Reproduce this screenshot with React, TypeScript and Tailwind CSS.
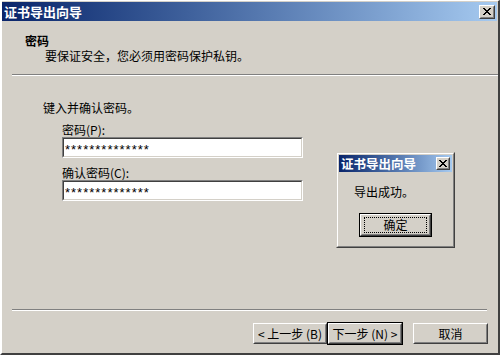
import React from "react";

const font = "font-['Noto_Sans_CJK_SC','Noto_Sans',sans-serif]";

function CloseX({ size = 8 }: { size?: number }) {
  return (
    <svg width={size} height={size - 1} viewBox="0 0 8 7" shapeRendering="crispEdges">
      <path d="M0 0h2v1h-2zM6 0h2v1h-2zM1 1h2v1h-2zM5 1h2v1h-2zM2 2h4v1h-4zM3 3h2v1h-2zM2 4h4v1h-4zM1 5h2v1h-2zM5 5h2v1h-2zM0 6h2v1h-2zM6 6h2v1h-2z" fill="#000" />
    </svg>
  );
}

function Raised({ className = "", children }: { className?: string; children?: React.ReactNode }) {
  return (
    <div className={`border border-t-white border-l-white border-r-[#404040] border-b-[#404040] bg-[#d4d0c8] ${className}`}>
      <div className="w-full h-full border border-t-[#d4d0c8] border-l-[#d4d0c8] border-r-[#808080] border-b-[#808080] flex items-center justify-center">
        {children}
      </div>
    </div>
  );
}

function Input() {
  return (
    <div className="w-[241px] h-[21px] border border-t-[#808080] border-l-[#808080] border-r-white border-b-white">
      <div className="w-full h-full border border-t-[#404040] border-l-[#404040] border-r-[#d4d0c8] border-b-[#d4d0c8] bg-white flex items-center pl-[1px]">
        <span className="text-[13px] leading-[12px] text-black font-['Liberation_Sans',sans-serif] tracking-[1px] pt-[4px]">**************</span>
      </div>
    </div>
  );
}

export default function App() {
  return (
    <div className={`${font} w-[500px] h-[355px] bg-[#d4d0c8] relative overflow-hidden`}>
      <div className="w-full h-full border-l-2 border-t border-l-white border-t-white border-r-2 border-b-2 border-r-[#404040] border-b-[#404040] flex flex-col">
        {/* title bar */}
        <div className="h-[19px] mt-[1px] mr-[1px] bg-gradient-to-r from-[#0a246a] to-[#a6caf0] flex items-center justify-between pl-[2px] pr-[2px]">
          <span className="text-white font-bold text-[13px] leading-[13px]">证书导出向导</span>
          <Raised className="w-[16px] h-[14px]">
            <CloseX />
          </Raised>
        </div>
        {/* header */}
        <div className="h-[53px] pl-[23px] pt-[13px] flex flex-col">
          <div className="text-[12px] leading-[13px] font-bold text-black">密码</div>
          <div className="text-[12px] leading-[13px] text-black pl-[20px] pt-[2px]">要保证安全，您必须用密码保护私钥。</div>
        </div>
        <div className="ml-[10px] mr-[0px] border-t border-t-[#808080] border-b border-b-white" />
        {/* body */}
        <div className="flex-1 flex flex-col pl-[41px] pt-[25px]">
          <div className="text-[12px] leading-[13px] text-black">键入并确认密码。</div>
          <div className="pl-[19px] pt-[9px] flex flex-col">
            <div className="text-[12px] leading-[13px] text-black">密码(P):</div>
            <div className="pt-[1px]"><Input /></div>
            <div className="text-[12px] leading-[13px] text-black pt-[8px]">确认密码(C):</div>
            <div className="pt-[1px]"><Input /></div>
          </div>
        </div>
        <div className="ml-[10px] mr-[11px] border-t border-t-[#808080] border-b border-b-white" />
        {/* buttons */}
        <div className="h-[42px] flex items-start pt-[12px] pl-[251px]">
          <Raised className="w-[74px] h-[21px]">
            <span className="text-[12px] leading-[12px] text-black whitespace-pre">&lt;&nbsp;上一步 (B)</span>
          </Raised>
          <div className="w-[76px] h-[23px] border border-black -mt-[1px]">
            <Raised className="w-full h-full">
              <span className="text-[12px] leading-[12px] text-black whitespace-pre">下一步 (N)&nbsp;&gt;</span>
            </Raised>
          </div>
          <div className="w-[10px]" />
          <Raised className="w-[75px] h-[21px]">
            <span className="text-[12px] leading-[12px] text-black">取消</span>
          </Raised>
        </div>
      </div>

      {/* popup message box */}
      <div className="absolute left-[336px] top-[152px] w-[119px] h-[96px] border border-t-[#d4d0c8] border-l-[#d4d0c8] border-r-[#404040] border-b-[#404040] bg-[#d4d0c8]">
        <div className="w-full h-full border border-t-white border-l-white border-r-[#808080] border-b-[#808080] p-[1px] flex flex-col">
          <div className="h-[17px] bg-gradient-to-r from-[#0a246a] to-[#a6caf0] flex items-center justify-between pl-[2px] pr-[2px]">
            <span className="text-white font-bold text-[12.5px] leading-[13px]">证书导出向导</span>
            <Raised className="w-[14px] h-[13px]">
              <CloseX />
            </Raised>
          </div>
          <div className="pl-[15px] pt-[13px] text-[12px] leading-[13px] text-black">导出成功。</div>
          <div className="pl-[20px] pt-[15px]">
            <div className="w-[73px] h-[24px] border border-black">
              <Raised className="w-full h-full">
                <div className="w-[63px] h-[16px] border border-dotted border-black flex items-center justify-center">
                  <span className="text-[12px] leading-[12px] text-black">确定</span>
                </div>
              </Raised>
            </div>
          </div>
        </div>
      </div>
    </div>
  );
}
